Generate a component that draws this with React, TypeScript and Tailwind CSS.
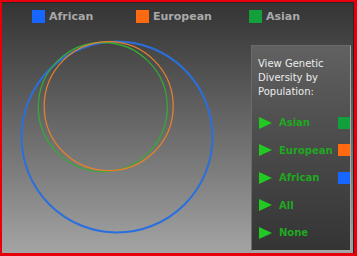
import React from "react";

const legend = [
  { label: "African", color: "bg-[#1766ff]", w: "w-[104px]" },
  { label: "European", color: "bg-[#ff6a10]", w: "w-[113px]" },
  { label: "Asian", color: "bg-[#12a03c]", w: "" },
];

const options = [
  { label: "Asian", swatch: "bg-[#12a03c]" },
  { label: "European", swatch: "bg-[#ff6a10]" },
  { label: "African", swatch: "bg-[#1766ff]" },
  { label: "All", swatch: "" },
  { label: "None", swatch: "" },
];

const Arrow = () => (
  <svg width="13" height="12" viewBox="0 0 13 12" className="shrink-0">
    <polygon points="0,0 13,6 0,12" fill="#22c922" />
  </svg>
);

const App = () => {
  return (
    <div
      className="w-[357px] h-[256px] border-red-600 border-t-2 border-l-2 border-r-[3px] border-b-[3px] bg-[#ff0000]"
      style={{ fontFamily: '"DejaVu Sans", Verdana, sans-serif' }}
    >
      <div className="h-full flex flex-col bg-gradient-to-b from-[#343434] to-[#a4a4a4] border-t border-r border-[#262626]">
        <div className="flex items-start pl-[30px] pt-[7px] h-[27px] shrink-0">
          {legend.map((l) => (
            <div key={l.label} className={`flex items-center gap-[4px] ${l.w}`}>
              <div className={`w-[13px] h-[13px] ${l.color}`} />
              <span className="text-[11px] font-bold text-[#a9a9a9] leading-[13px]">
                {l.label}
              </span>
            </div>
          ))}
        </div>

        <div className="flex flex-1 min-h-0">
          <svg width="249" height="222" className="shrink-0">
            <circle cx="115" cy="107" r="95.5" fill="none" stroke="#2a6fde" strokeWidth="2" />
            <circle cx="100.8" cy="77" r="64.5" fill="none" stroke="#35aa35" strokeWidth="1.3" />
            <circle cx="106.7" cy="76.2" r="64.5" fill="none" stroke="#e3802e" strokeWidth="1.3" />
          </svg>

          <div className="w-[100px] mt-[15px] mb-[2px] flex flex-col bg-gradient-to-b from-[#616161] to-[#343434] border border-[#6a6a6a] border-r-[#a8a8a8] border-b-[#a8a8a8]">
            <div className="pl-[6px] pt-[11px] text-[10px] leading-[14px] text-[#ececec]">
              View Genetic
              <br />
              Diversity by
              <br />
              Population:
            </div>
            <div className="mt-[10px] flex flex-col">
              {options.map((o) => (
                <div key={o.label} className="h-[27.5px] flex items-center pl-[7px]">
                  <Arrow />
                  <span className="ml-[7px] flex-1 text-[10px] font-bold text-[#20a820]">
                    {o.label}
                  </span>
                  {o.swatch && <div className={`w-[12px] h-[12px] ${o.swatch}`} />}
                </div>
              ))}
            </div>
          </div>
        </div>
      </div>
    </div>
  );
};

export default App;
